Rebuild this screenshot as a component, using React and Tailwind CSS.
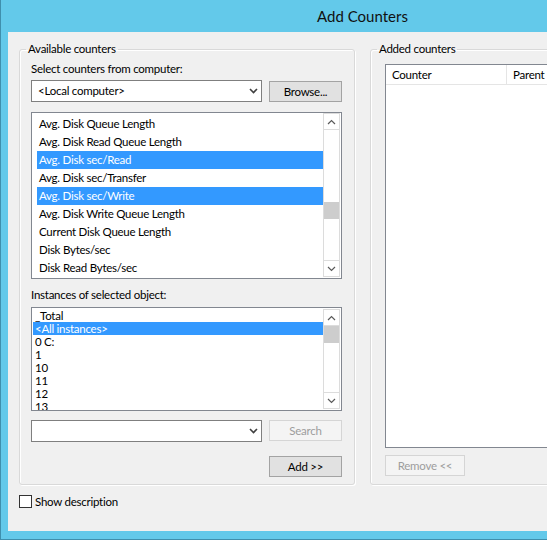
import React from "react";

// --- DATA ---
const COUNTERS = [
  { name: "Avg. Disk Queue Length" },
  { name: "Avg. Disk Read Queue Length" },
  { name: "Avg. Disk sec/Read", selected: true },
  { name: "Avg. Disk sec/Transfer" },
  { name: "Avg. Disk sec/Write", selected: true },
  { name: "Avg. Disk Write Queue Length" },
  { name: "Current Disk Queue Length" },
  { name: "Disk Bytes/sec" },
  { name: "Disk Read Bytes/sec" },
];

const INSTANCES = [
  { name: "_Total" },
  { name: "<All instances>", selected: true },
  { name: "0 C:" },
  { name: "1" },
  { name: "10" },
  { name: "11" },
  { name: "12" },
  { name: "13" },
];

const COLUMNS = [
  { label: "Counter", width: "w-[121px]" },
  { label: "Parent", width: "w-[70px]" },
  { label: "Inst...", width: "w-[60px]" },
  { label: "Computer", width: "w-[80px]" },
];

// --- SMALL PIECES ---
const Chevron = ({ up = false, className = "" }) => (
  <svg width="9" height="6" viewBox="0 0 9 6" className={className}>
    <polyline
      points={up ? "1,5 4.5,1.5 8,5" : "1,1 4.5,4.5 8,1"}
      fill="none"
      stroke="#5a5a5a"
      strokeWidth="1.2"
    />
  </svg>
);

const ScrollBar = ({ thumbOffset, className = "" }) => (
  <div
    className={`w-[17px] shrink-0 flex flex-col border border-[#dcdcdc] bg-white ${className}`}
  >
    <div className="h-[16px] border-b border-[#dcdcdc] flex items-center justify-center">
      <Chevron up />
    </div>
    <div className="flex-1 flex flex-col">
      <div className={thumbOffset} />
      <div className="h-[17px] bg-[#cdcdcd]" />
    </div>
    <div className="h-[16px] border-t border-[#dcdcdc] flex items-center justify-center">
      <Chevron />
    </div>
  </div>
);

const Combo = ({ text }) => (
  <div className="w-[231px] h-[22px] border border-[#7f7f7f] bg-white flex items-center justify-between pl-[6px] pr-[3px]">
    <span className="leading-[16px]">{text}</span>
    <svg width="9" height="6" viewBox="0 0 9 6">
      <polyline points="1,1 4.5,4.5 8,1" fill="none" stroke="#404040" strokeWidth="1.6" />
    </svg>
  </div>
);

const Button = ({ children, disabled = false, className = "" }) => (
  <div
    className={`h-[21px] flex items-center justify-center border ${
      disabled
        ? "border-[#d5d5d5] bg-[#f4f4f4] text-[#9d9d9d]"
        : "border-[#a3a3a3] bg-[#e1e1e1] text-black"
    } ${className}`}
  >
    {children}
  </div>
);

// --- MAIN COMPONENT ---
const App = () => {
  return (
    <div className="w-[547px] h-[540px] overflow-hidden bg-[#63c9ea] font-['Lato','Noto_Sans',sans-serif] text-[11.5px] tracking-[-0.25px] text-black">
      <div className="w-[724px] h-[540px] border-l border-b border-[#3f8fad] flex flex-col">
        {/* Title bar */}
        <div className="h-[32px] flex items-center justify-center text-[15px] tracking-normal text-[#111]">
          Add Counters
        </div>

        {/* Client area */}
        <div className="mx-[7px] h-[499px] bg-[#f0f0f0] pl-[11px] pt-[9px] flex flex-col">
          <div className="flex gap-[15px]">
            {/* Available counters */}
            <fieldset className="w-[336px] h-[444px] border border-[#d9d9d9] rounded-[3px] shadow-[inset_1px_1px_0_#ffffff,1px_1px_0_#ffffff]">
              <legend className="ml-[6px] px-[2px] leading-[16px]">Available counters</legend>
              <div className="flex flex-col px-[11px] pt-[4px]">
                <div className="h-[16px] leading-[16px]">Select counters from computer:</div>
                <div className="flex gap-[7px] mt-[3px]">
                  <Combo text="<Local computer>" />
                  <Button className="w-[73px] mt-[1px]">Browse...</Button>
                </div>

                {/* Counter list */}
                <div className="mt-[10px] w-[311px] h-[167px] border border-[#828790] bg-white flex">
                  <div className="flex-1 pt-[2px] pl-[5px]">
                    {COUNTERS.map((c) => (
                      <div
                        key={c.name}
                        className={`h-[18px] leading-[18px] pl-[2px] whitespace-nowrap ${
                          c.selected ? "bg-[#3399ff] text-white" : ""
                        }`}
                      >
                        {c.name}
                      </div>
                    ))}
                  </div>
                  <ScrollBar thumbOffset="h-[72px]" className="mr-[1px] mb-[1px]" />
                </div>

                <div className="mt-[8px] h-[16px] leading-[16px]">Instances of selected object:</div>

                {/* Instance list */}
                <div className="mt-[4px] w-[311px] h-[104px] border border-[#828790] bg-white flex overflow-hidden">
                  <div className="flex-1 pt-[1px] pl-[1px] overflow-hidden">
                    {INSTANCES.map((inst) => (
                      <div
                        key={inst.name}
                        className={`h-[13px] leading-[13px] pl-[2px] whitespace-nowrap ${
                          inst.selected ? "bg-[#3399ff] text-white" : ""
                        }`}
                      >
                        {inst.name}
                      </div>
                    ))}
                  </div>
                  <ScrollBar thumbOffset="h-0" className="my-[1px] mr-[1px]" />
                </div>

                <div className="flex gap-[7px] mt-[9px]">
                  <Combo text="" />
                  <Button disabled className="w-[73px]">Search</Button>
                </div>

                <Button className="w-[73px] mt-[14px] ml-[238px]">Add &gt;&gt;</Button>
              </div>
            </fieldset>

            {/* Added counters */}
            <fieldset className="w-[330px] h-[444px] border border-[#d9d9d9] rounded-[3px] shadow-[inset_1px_1px_0_#ffffff,1px_1px_0_#ffffff]">
              <legend className="ml-[6px] px-[2px] leading-[16px]">Added counters</legend>
              <div className="flex flex-col pl-[14px] pt-[7px]">
                <div className="w-[300px] h-[384px] border border-[#828790] bg-white overflow-hidden">
                  <div className="flex h-[20px] border-b border-[#e5e5e5]">
                    {COLUMNS.map((col) => (
                      <div
                        key={col.label}
                        className={`${col.width} shrink-0 border-r border-[#e5e5e5] pl-[6px] leading-[19px]`}
                      >
                        {col.label}
                      </div>
                    ))}
                  </div>
                </div>
                <Button disabled className="w-[80px] mt-[7px]">Remove &lt;&lt;</Button>
              </div>
            </fieldset>
          </div>

          {/* Show description */}
          <div className="mt-[10px] flex items-center">
            <div className="w-[13px] h-[13px] border border-[#333333] bg-white" />
            <span className="ml-[3px] leading-[13px]">Show description</span>
          </div>
        </div>
      </div>
    </div>
  );
};

export default App;
